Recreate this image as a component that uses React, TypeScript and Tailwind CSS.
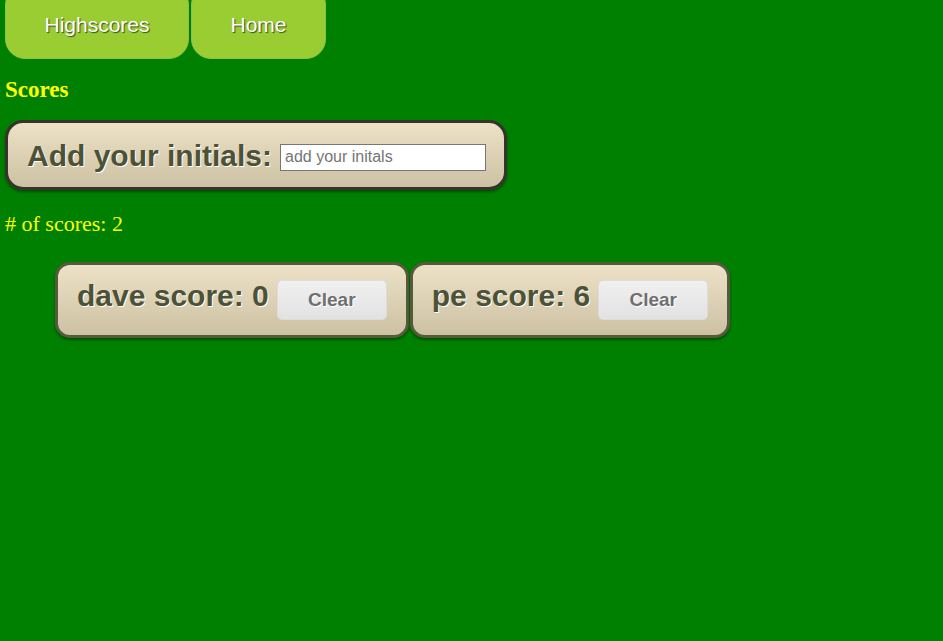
import React, { useState } from 'react';

interface Score {
  name: string;
  score: number;
}

const cardBg = 'bg-gradient-to-b from-[#ede2c6] to-[#cdc1a4]';

const App: React.FC = () => {
  const [scores, setScores] = useState<Score[]>([
    { name: 'dave', score: 0 },
    { name: 'pe', score: 6 },
  ]);

  return (
    <div className="min-h-screen bg-[#008000] font-['Liberation_Sans',Arial,sans-serif] overflow-hidden">
      <nav className="flex gap-[2px] px-[5px]">
        <button className="mt-[-15px] h-[74px] w-[184px] pt-[5px] rounded-[20px] bg-[#9acd32] border border-[#8bc34a] text-white text-[21px] [text-shadow:1px_1px_1px_#3a4a20]">
          Highscores
        </button>
        <button className="mt-[-15px] h-[74px] w-[135px] pt-[5px] rounded-[20px] bg-[#9acd32] border border-[#8bc34a] text-white text-[21px] [text-shadow:1px_1px_1px_#3a4a20]">
          Home
        </button>
      </nav>

      <h2 className="mt-[18px] px-[5px] font-['Liberation_Serif',serif] font-bold text-[23px] text-[#ffff00] leading-[26px]">
        Scores
      </h2>

      <div
        className={`mt-[17px] ml-[5px] w-[502px] h-[70px] flex items-center pl-[19px] rounded-[18px] border-[3px] border-[#36332c] shadow-[0_2px_3px_rgba(0,0,0,0.4)] ${cardBg}`}
      >
        <span className="font-bold text-[30px] text-[#4c5237] [text-shadow:1px_1px_0_#ffffff]">
          Add your initials:
        </span>
        <input
          className="ml-[8px] mt-[4px] w-[206px] h-[27px] bg-white border border-[#767676] px-[4px] text-[16px] text-black placeholder:text-[#757575] outline-none"
          placeholder="add your initals"
        />
      </div>

      <p className="mt-[21px] px-[5px] font-['Liberation_Serif',serif] text-[22px] text-[#ffff00] leading-[25px]">
        # of scores: {scores.length}
      </p>

      <ul className="mt-[26px] pl-[55px] flex gap-[1px]">
        {scores.map((s, i) => (
          <li
            key={i}
            className={`h-[76px] flex items-center pl-[19px] pr-[19px] rounded-[15px] border-[3px] border-[#555a3d] shadow-[0_2px_3px_rgba(0,0,0,0.4)] ${cardBg}`}
          >
            <span className="font-bold text-[30px] text-[#4c5237] [text-shadow:1px_1px_0_#ffffff] mt-[-10px]">
              {s.name} score: {s.score}
            </span>
            <button
              onClick={() => setScores(scores.filter((_, j) => j !== i))}
              className="ml-[8px] w-[110px] h-[40px] rounded-[5px] bg-gradient-to-b from-[#f0f0f0] to-[#e2e2e2] border border-[#dcdcdc] font-bold text-[19px] text-[#6f6f6f] [text-shadow:1px_1px_0_#ffffff]"
            >
              Clear
            </button>
          </li>
        ))}
      </ul>
    </div>
  );
};

export default App;
